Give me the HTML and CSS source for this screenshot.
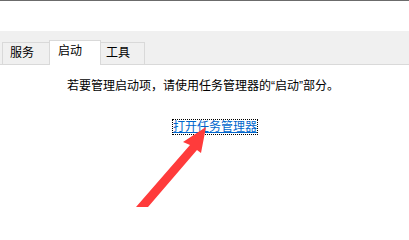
FILE: index.html
```html
<!DOCTYPE html>
<html lang="zh-CN">
<head>
<meta charset="utf-8">
<link rel="stylesheet" href="styles.css">
</head>
<body>
<div class="window">
  <div class="topgap"></div>
  <div class="tabstrip">
    <div class="tab tab-services">服务</div>
    <div class="tab tab-startup selected">启动</div>
    <div class="tab tab-tools">工具</div>
  </div>
  <div class="content">
    <p class="msg">若要管理启动项，请使用任务管理器的“启动”部分。</p>
    <div class="linkrow"><a class="link" href="#">打开任务管理器</a></div>
  </div>
  <svg class="arrow" width="409" height="207" viewBox="0 0 409 207">
    <polygon points="206,127 183,142 190,145 136,207 148,207 197,150 201,153" fill="#ff3b3b"/>
  </svg>
</div>
</body>
</html>
```
FILE: styles.css
```css
html, body {
  margin: 0;
  padding: 0;
  background: #ffffff;
}
.window {
  position: relative;
  width: 409px;
  height: 207px;
  overflow: hidden;
  font-family: "Liberation Sans", "Noto Sans CJK SC", sans-serif;
  font-size: 12px;
  color: #000;
  border-top: 1px solid #6b6b6b;
  box-sizing: border-box;
}
.topgap {
  height: 30px;
}
.tabstrip {
  display: flex;
  align-items: flex-end;
  height: 33px;
  background: #f0f0f0;
  border-bottom: 1px solid #d9d9d9;
  padding-left: 2px;
}
.tab {
  box-sizing: border-box;
  height: 22px;
  line-height: 21px;
  border: 1px solid #d9d9d9;
  border-bottom: none;
  background: #f0f0f0;
  white-space: nowrap;
}
.tab-services {
  width: 48px;
  padding-left: 7px;
}
.tab-startup {
  width: 52px;
  margin-left: -1px;
  padding-left: 8px;
}
.tab-tools {
  width: 45px;
  margin-left: -1px;
  padding-left: 5px;
}
.tab.selected {
  height: 25px;
  line-height: 21px;
  background: #ffffff;
  margin-bottom: -1px;
  position: relative;
  z-index: 1;
}
.content {
  padding-top: 13px;
}
.msg {
  margin: 0;
  padding-left: 67px;
  line-height: 16px;
  white-space: nowrap;
}
.linkrow {
  margin-top: 25px;
  padding-left: 172px;
  line-height: 14px;
}
.link {
  display: inline-block;
  color: #0066cc;
  text-decoration: underline;
  border: 1px dotted #000;
  padding: 0;
}
.arrow {
  position: absolute;
  left: 0;
  top: -1px;
}
```
